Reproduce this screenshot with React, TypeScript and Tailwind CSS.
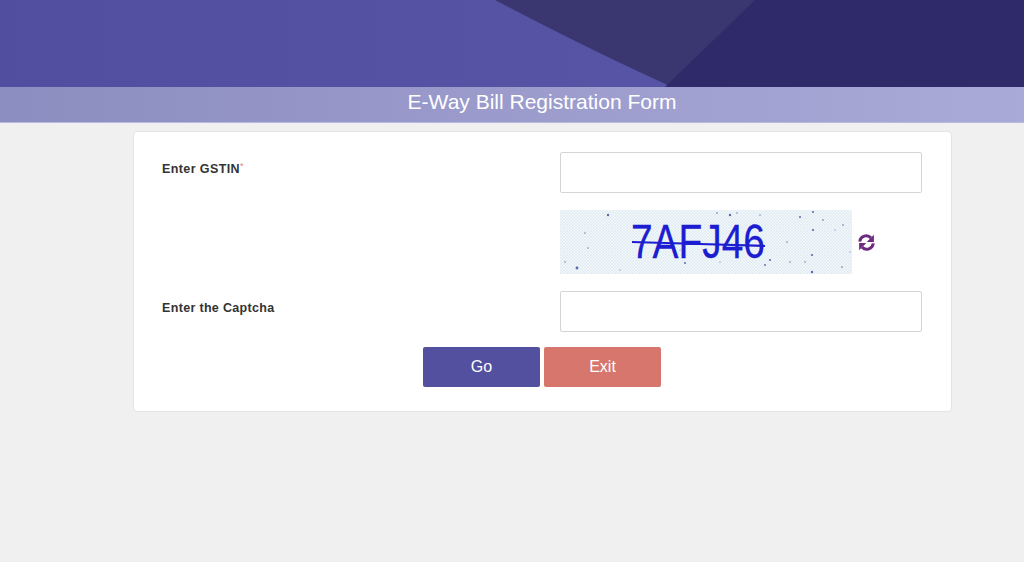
const dots = [
  [608, 215, 1.2], [577, 268, 1.4], [585, 233, 0.7], [717, 213, 0.8], [730, 215, 1.2], [737, 213, 0.7], [760, 215, 0.7], [800, 217, 1],
  [813, 212, 1], [813, 230, 1.1], [843, 225, 0.8], [812, 255, 1.1], [812, 272, 1.2], [770, 260, 1], [765, 265, 0.9], [685, 263, 1],
  [787, 242, 0.7], [842, 267, 0.8], [850, 252, 0.6], [565, 262, 0.7], [588, 248, 0.7], [823, 220, 0.8], [620, 270, 0.6], [720, 262, 0.6],
  [805, 262, 0.7], [835, 230, 0.6], [790, 262, 0.7], [680, 250, 0.5],
];

function Captcha() {
  return (
    <svg width="292" height="64" viewBox="560 210 292 64" className="block">
      <defs>
        <pattern id="mesh" width="3" height="3" patternUnits="userSpaceOnUse">
          <rect width="3" height="3" fill="#f1f7fa" />
          <path d="M0 3L3 0M0 0L3 3" stroke="#d6e4ec" strokeWidth="0.5" />
        </pattern>
      </defs>
      <rect x="560" y="210" width="292" height="64" fill="url(#mesh)" />
      {dots.map(([x, y, r], i) => (
        <circle key={i} cx={x} cy={y} r={r} fill="#5a6aa8" />
      ))}
      <text
        x="631"
        y="258"
        fontFamily="'Liberation Sans', Arial, sans-serif"
        fontSize="49"
        textLength="134"
        lengthAdjust="spacingAndGlyphs"
        fill="#1c1cd0"
        stroke="#1c1cd0"
        strokeWidth="0.3"
      >
        7AFJ46
      </text>
      <path d="M632 242L700 244L765 246" stroke="#1c1cd0" strokeWidth="2.2" fill="none" />
    </svg>
  );
}

function RefreshIcon() {
  const half = (
    <>
      <path d="M2.6 8.2A6.2 6.2 0 0 1 13.2 4.6" fill="none" stroke="#6c2a80" strokeWidth="2.8" />
      <path d="M16 1.6V8.6H9.2Z" fill="#6c2a80" />
    </>
  );
  return (
    <svg width="19" height="19" viewBox="0 0 18 18" className="ml-[5px]">
      {half}
      <g transform="rotate(180 9 9)">{half}</g>
    </svg>
  );
}

export default function App() {
  return (
    <div className="min-h-[562px] bg-[#f0f0f0] font-['Liberation_Sans',Arial,sans-serif]">
      <div className="h-[87px] bg-gradient-to-r from-[#524e9f] to-[#5a56a9]">
        <svg width="1024" height="87" viewBox="0 0 1024 87" className="block">
          <path d="M495 0Q590 50 672 87L1024 87L1024 0Z" fill="#3a366f" />
          <path d="M755 0L1024 0L1024 87L665 87Z" fill="#2f2b6a" />
        </svg>
      </div>
      <div className="h-[36px] pl-[60px] bg-gradient-to-r from-[#8c8dc0] to-[#aaaad8] border-b border-[#b9b9de] text-center text-[21px] leading-[30px] text-white">
        E-Way Bill Registration Form
      </div>
      <div className="ml-[133px] mt-[8px] w-[819px] h-[281px] rounded-[4px] border border-[#e4e4e4] bg-white pt-5">
        <div className="flex">
          <div className="w-[426px] pl-7 leading-[32px]">
            <label className="text-[12.5px] font-bold tracking-[0.4px] text-[#333]">
              Enter GSTIN<sup className="text-[#e58080] font-normal text-[9px]">*</sup>
            </label>
          </div>
          <input className="h-[41px] w-[362px] rounded-[2px] border border-[#d4d4d4] bg-white" />
        </div>
        <div className="flex items-center pl-[426px] mt-[17px]">
          <Captcha />
          <RefreshIcon />
        </div>
        <div className="flex mt-[17px]">
          <div className="w-[426px] pl-7 leading-[32px]">
            <label className="text-[12.5px] font-bold tracking-[0.33px] text-[#333]">
              Enter the Captcha
            </label>
          </div>
          <input className="h-[41px] w-[362px] rounded-[2px] border border-[#d4d4d4] bg-white" />
        </div>
        <div className="flex gap-1 mt-[15px] pl-[289px]">
          <button className="h-10 w-[117px] rounded-[2px] bg-[#5450a0] text-[16px] text-white">Go</button>
          <button className="h-10 w-[117px] rounded-[2px] bg-[#d6766c] text-[16px] text-white">Exit</button>
        </div>
      </div>
    </div>
  );
}
